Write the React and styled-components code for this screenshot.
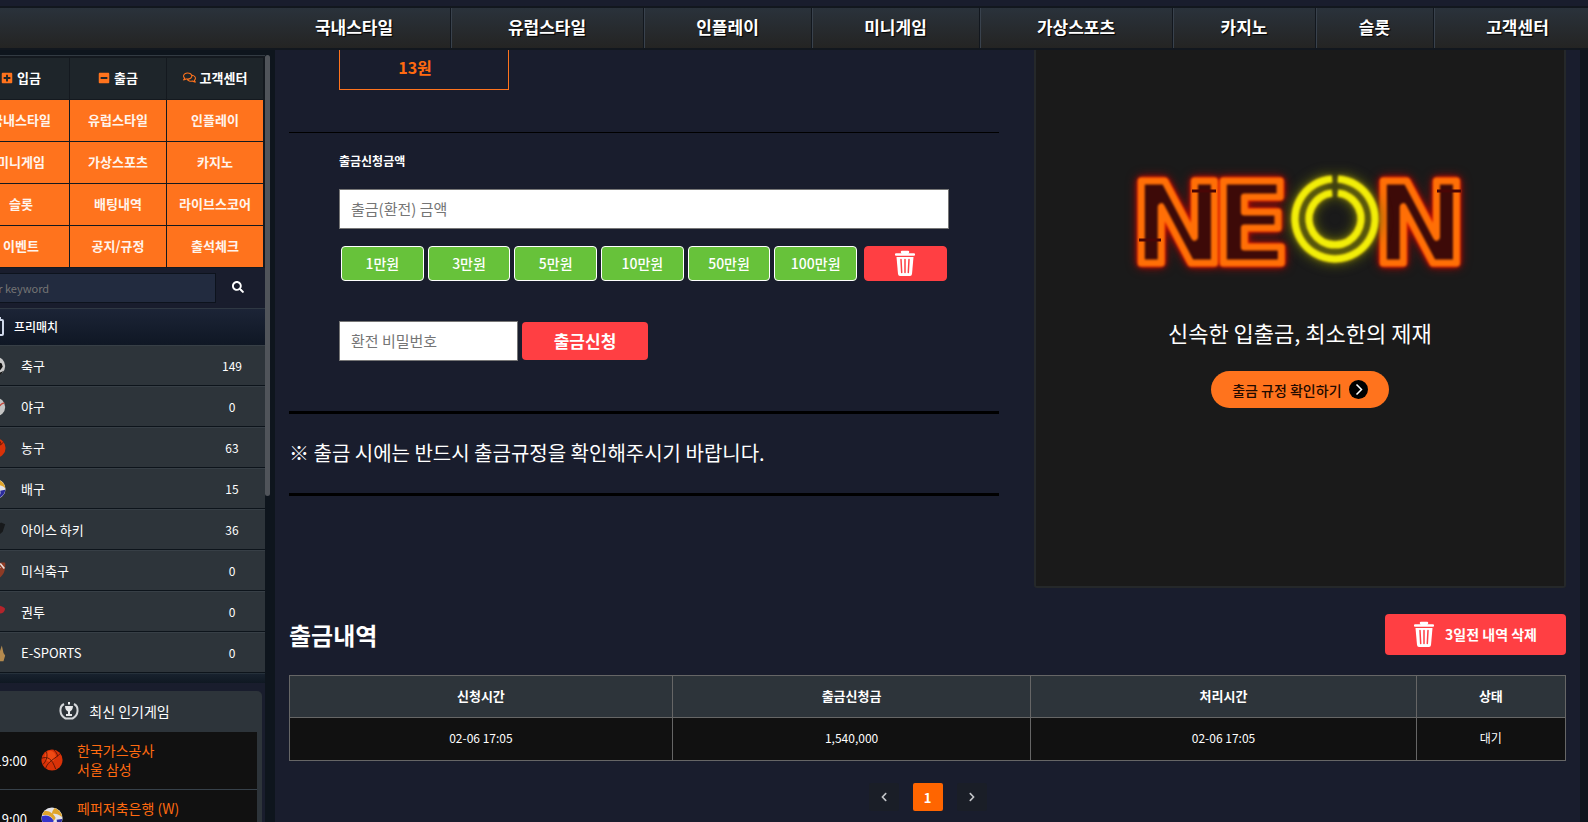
import React from 'react';
import styled, { createGlobalStyle } from 'styled-components';
import { FaPlusSquare, FaMinusSquare, FaRegComments, FaSearch, FaChevronLeft, FaChevronRight } from 'react-icons/fa';

const orange = '#ff731d';
const red = '#ff3f43';
const navy = '#191d2d';

const navItems = ['국내스타일', '유럽스타일', '인플레이', '미니게임', '가상스포츠', '카지노', '슬롯', '고객센터'];

const quickItems = [
    { label: '입금', icon: FaPlusSquare },
    { label: '출금', icon: FaMinusSquare },
    { label: '고객센터', icon: FaRegComments },
];

const menuItems = [
    '국내스타일',
    '유럽스타일',
    '인플레이',
    '미니게임',
    '가상스포츠',
    '카지노',
    '슬롯',
    '배팅내역',
    '라이브스코어',
    '이벤트',
    '공지/규정',
    '출석체크',
];

const sports = [
    { name: '축구', count: 149, icon: 'soccer' },
    { name: '야구', count: 0, icon: 'baseball' },
    { name: '농구', count: 63, icon: 'basketball' },
    { name: '배구', count: 15, icon: 'volleyball' },
    { name: '아이스 하키', count: 36, icon: 'hockey' },
    { name: '미식축구', count: 0, icon: 'football' },
    { name: '권투', count: 0, icon: 'boxing' },
    { name: 'E-SPORTS', count: 0, icon: 'esports' },
];

const games = [
    { time: '19:00', icon: 'basketball', teams: ['한국가스공사', '서울 삼성'] },
    { time: '19:00', icon: 'volleyball', teams: ['페퍼저축은행 (W)'] },
];

const amounts = ['1만원', '3만원', '5만원', '10만원', '50만원', '100만원'];

const history = [{ requested: '02-06 17:05', amount: '1,540,000', handled: '02-06 17:05', status: '대기' }];

const drawings = {
    soccer: (
        <>
            <circle cx="12" cy="12" r="11" fill="#c9c9c9" />
            <path d="M14 7l5 2 1 4-3 4-6-3-1-5z" fill="#111" />
            <path d="M5 4l-3 5 3 3 3-4zM16 20l5-2-3 4-5 1zM6 19l-3-2 4 5 4 1z" fill="#151515" />
        </>
    ),
    baseball: (
        <>
            <circle cx="12" cy="12" r="11" fill="#c4c4c4" />
            <path d="M22 7c-5 1-8 5-9 15M3 5c4 3 5 8 3 15" fill="none" stroke="#c4473c" strokeWidth="1.5" />
        </>
    ),
    basketball: (
        <>
            <circle cx="12" cy="12" r="11.5" fill="#d93208" />
            <circle cx="10" cy="8" r="6" fill="#ff5a1c" opacity="0.6" />
            <path
                d="M14 1c2 2 4 4 4 7M5 21C8 13 15 11 21 5M1 10c6-2 11 0 15 12M6 3c1 4 1 9-4 14"
                fill="none"
                stroke="#5a1404"
                strokeWidth="1"
            />
        </>
    ),
    volleyball: (
        <>
            <circle cx="12" cy="12" r="11.5" fill="#e4e4ea" />
            <path d="M1 10c5-2 10 0 13 5l-5 8C4 22 0 17 1 10z" fill="#3434c8" />
            <path d="M4 4c5 0 10 3 12 8l-2 3C11 9 7 8 1 9zM15 1c5 2 8 6 8 10-3-3-7-4-11-4 0-2 1-4 3-6z" fill="#e0a52a" />
            <path d="M23 13c0 5-4 9-9 10 3-3 4-6 3-9z" fill="#2a2a9c" />
        </>
    ),
    hockey: <path d="M2 20l4-9 12-8 5 2-3 9-9 8z" fill="#17191b" />,
    football: (
        <>
            <path d="M23 2c1 10-3 20-14 20-5 0-7-3-6-8C5 6 13 1 23 2z" fill="#8e3b25" />
            <path d="M17 3l5 6M11 14l6-7" stroke="#e8e0dc" strokeWidth="2" />
        </>
    ),
    boxing: <path d="M4 18l2-10c6-5 12-5 17 0-1 5-4 6-8 6l-3 6z" fill="#b3242b" />,
    esports: <path d="M3 22l3-8 5 2 1-9 4 5 3-9 2 9 2 3-2 7z" fill="#b48a4e" />,
};

const SportIcon = ({ name, size = 20 }) => (
    <svg width={size} height={size} viewBox="0 0 24 24" aria-hidden="true">
        {drawings[name]}
    </svg>
);

const TrashIcon = () => (
    <svg width="20" height="26" viewBox="0 0 20 26" fill="none" aria-hidden="true">
        <path d="M7 2h6M1 4.500h18" stroke="#fff" strokeWidth="2.500" strokeLinecap="round" />
        <path d="M1.500 7h17l-1.500 17q-.3 2-2 2H5q-1.700 0-2-2z" fill="#fff" />
        <path d="M6 9.500l.7 13M10 9.500v13M14 9.500l-.7 13" stroke={red} strokeWidth="1.500" strokeLinecap="round" />
    </svg>
);

const BoardIcon = () => (
    <svg width="18" height="20" viewBox="0 0 18 20" fill="none" stroke="#cfd8ea" strokeWidth="2" aria-hidden="true">
        <rect x="1" y="4" width="16" height="15" rx="1" />
        <path d="M4 1v6M14 1v4" />
    </svg>
);

const TrophyIcon = () => (
    <svg width="20" height="18" viewBox="0 0 20 18" fill="none" aria-hidden="true">
        <path d="M6 4h8c0 3-1.500 5-3 5.500V12h2v2H7v-2h2V9.500C7.500 9 6 7 6 4zM9 0h2v2.500H9z" fill="#e6e8ea" />
        <path d="M5 2C0 4.500 0 13 6.500 16.500h7C20 13 20 4.500 15 2" stroke="#d4d7da" strokeWidth="2" />
    </svg>
);

const CircleArrow = () => (
    <svg width="19" height="19" viewBox="0 0 19 19" fill="none" aria-hidden="true">
        <circle cx="9.500" cy="9.500" r="9.500" fill="#000" />
        <path d="M7.500 4.500l5 5-5 5" stroke="#fff" strokeWidth="1.500" />
    </svg>
);

const NeonLogo = () => (
    <NeonSvg viewBox="0 0 326 124" role="img" aria-label="NEON">
        <Tubes>
            <text x="-6 76" y="101">
                NE
            </text>
            <text x="236" y="101">
                N
            </text>
        </Tubes>
        <g stroke="#4a0606" strokeWidth="3">
            <path d="M55 29h24M2 78h22M300 29h24" />
        </g>
        <Ring>
            <path d="M201 17a40 40 0 1 1-6 0" />
            <path d="M201 31a26 26 0 1 1-6 0" />
        </Ring>
    </NeonSvg>
);

const App = () => (
    <Page>
        <GlobalStyle />
        <TopStrip />
        <Nav>
            {navItems.map((item) => (
                <NavLink key={item} href="#" $chars={item.length}>
                    {item}
                </NavLink>
            ))}
        </Nav>
        <Columns>
            <Sidebar>
                <SidebarContent>
                    <Menu>
                        {quickItems.map(({ label, icon: Icon }) => (
                            <QuickLink key={label} href="#">
                                <Icon size={label.length > 2 ? 13 : 12} color={orange} />
                                {label}
                            </QuickLink>
                        ))}
                        {menuItems.map((item) => (
                            <MenuLink key={item} href="#">
                                {item}
                            </MenuLink>
                        ))}
                    </Menu>
                    <Search onSubmit={(e) => e.preventDefault()}>
                        <SearchInput type="text" placeholder="Enter keyword" aria-label="Enter keyword" />
                        <SearchButton type="submit" aria-label="Search">
                            <FaSearch size={12} />
                        </SearchButton>
                    </Search>
                    <SportsHeader>
                        <BoardIcon />
                        프리매치
                    </SportsHeader>
                    {sports.map(({ name, count, icon }) => (
                        <SportRow key={name} href="#">
                            <SportIcon name={icon} />
                            <SportName>{name}</SportName>
                            <SportCount>{count}</SportCount>
                        </SportRow>
                    ))}
                    <SportsFooter />
                    <Popular>
                        <PopularTitle>
                            <TrophyIcon />
                            최신 인기게임
                        </PopularTitle>
                        {games.map(({ time, icon, teams }) => (
                            <Game key={teams[0]} href="#">
                                <GameTime>{time}</GameTime>
                                <SportIcon name={icon} size={22} />
                                <Teams>
                                    {teams.map((team) => (
                                        <span key={team}>{team}</span>
                                    ))}
                                </Teams>
                            </Game>
                        ))}
                    </Popular>
                </SidebarContent>
                <ScrollThumb />
            </Sidebar>
            <Main>
                <Top>
                    <Withdraw onSubmit={(e) => e.preventDefault()}>
                        <Inset>
                            <Balance>13원</Balance>
                        </Inset>
                        <Line />
                        <Inset>
                            <FieldLabel htmlFor="amount">출금신청금액</FieldLabel>
                            <TextInput id="amount" type="text" placeholder="출금(환전) 금액" />
                            <Amounts>
                                {amounts.map((amount) => (
                                    <AmountButton key={amount} type="button">
                                        {amount}
                                    </AmountButton>
                                ))}
                                <ClearButton type="button" aria-label="Clear">
                                    <TrashIcon />
                                </ClearButton>
                            </Amounts>
                            <SubmitRow>
                                <PasswordInput type="password" placeholder="환전 비밀번호" aria-label="환전 비밀번호" />
                                <SubmitButton type="submit">출금신청</SubmitButton>
                            </SubmitRow>
                        </Inset>
                        <Notice>※ 출금 시에는 반드시 출금규정을 확인해주시기 바랍니다.</Notice>
                    </Withdraw>
                    <Promo>
                        <NeonLogo />
                        <Slogan>신속한 입출금, 최소한의 제재</Slogan>
                        <RulesLink href="#">
                            출금 규정 확인하기
                            <CircleArrow />
                        </RulesLink>
                    </Promo>
                </Top>
                <HistoryHeader>
                    <HistoryTitle>출금내역</HistoryTitle>
                    <DeleteButton type="button">
                        <TrashIcon />
                        3일전 내역 삭제
                    </DeleteButton>
                </HistoryHeader>
                <HistoryTable>
                    <colgroup>
                        <Col $width="30%" />
                        <Col $width="28.1%" />
                        <Col $width="30.2%" />
                        <Col $width="11.7%" />
                    </colgroup>
                    <thead>
                        <tr>
                            <th>신청시간</th>
                            <th>출금신청금</th>
                            <th>처리시간</th>
                            <th>상태</th>
                        </tr>
                    </thead>
                    <tbody>
                        {history.map(({ requested, amount, handled, status }) => (
                            <tr key={requested}>
                                <td>{requested}</td>
                                <td>{amount}</td>
                                <td>{handled}</td>
                                <td>{status}</td>
                            </tr>
                        ))}
                    </tbody>
                </HistoryTable>
                <Pagination>
                    <PageButton type="button" aria-label="Previous">
                        <FaChevronLeft size={10} />
                    </PageButton>
                    <PageButton type="button" $active>
                        1
                    </PageButton>
                    <PageButton type="button" aria-label="Next">
                        <FaChevronRight size={10} />
                    </PageButton>
                </Pagination>
            </Main>
        </Columns>
    </Page>
);

const GlobalStyle = createGlobalStyle`
    * {
        box-sizing: border-box;
    }

    body {
        margin: 0;
        background: #0e151d;
        color: #fff;
        font-family: 'Noto Sans CJK KR', 'Noto Sans', sans-serif;
        font-size: 13px;
    }

    a {
        color: inherit;
        text-decoration: none;
    }

    button,
    input {
        font-family: inherit;
    }

    button {
        padding: 0 0 2px;
        border: 0;
        color: #fff;
        cursor: pointer;
    }
`;

const Page = styled.div`
    display: flex;
    flex-direction: column;
    height: 100vh;
    overflow: hidden;
`;

const TopStrip = styled.div`
    flex: none;
    height: 6px;
    background:
        radial-gradient(ellipse at 88px 0, #4a1228 0, transparent 18px),
        radial-gradient(ellipse at 58px 0, #3a2c2c 0, transparent 14px),
        ${navy};
`;

const Nav = styled.nav`
    display: flex;
    flex: none;
    height: 44px;
    padding-left: 258px;
    border: solid #12171e;
    border-width: 2px 0;
    background: linear-gradient(#2a323b, #242423);
`;

const NavLink = styled.a`
    display: flex;
    flex: none;
    justify-content: center;
    align-items: center;
    width: ${({ $chars }) => 68 + $chars * 25}px;
    padding-bottom: 3px;
    border-right: 1px solid #12171e;
    box-shadow: 1px 0 #39424d;
    font-size: 17px;
    font-weight: 700;
    text-shadow: 1px 1px 1px #000;
`;

const Columns = styled.div`
    display: flex;
    flex: 1;
    min-height: 0;
    padding-right: 8px;
`;

const Sidebar = styled.aside`
    display: flex;
    flex: none;
    align-items: flex-start;
    width: 303px;
    margin-left: -28px;
    padding-top: 5px;
`;

const SidebarContent = styled.div`
    width: 293px;
    background: ${navy};
`;

const ScrollThumb = styled.div`
    width: 5px;
    height: 441px;
    border-radius: 3px;
    background: #50545a;
`;

const Menu = styled.nav`
    display: grid;
    grid-template-columns: repeat(3, 1fr);
    gap: 1px;
    padding: 2px 2px 1px 1px;
    border-top: 1px solid #323a42;
    background: #14191f;
`;

const QuickLink = styled.a`
    display: flex;
    justify-content: center;
    align-items: center;
    gap: 4px;
    height: 41px;
    padding-bottom: 2px;
    background: #1e252a;
    font-weight: 700;
`;

const MenuLink = styled(QuickLink)`
    background: ${orange};
    color: #fff4ec;
`;

const Search = styled.form`
    display: flex;
    align-items: center;
    height: 40px;
    padding-right: 5px;
`;

const SearchInput = styled.input`
    width: 244px;
    height: 30px;
    padding: 0 0 0 2px;
    border: 1px solid #0d131d;
    background: #222b3f;
    color: #fff;
    font-size: 11px;

    &::placeholder {
        color: #757575;
    }
`;

const SearchButton = styled.button`
    flex: 1;
    height: 30px;
    background: none;
`;

const SportsHeader = styled.h2`
    display: flex;
    align-items: center;
    gap: 10px;
    height: 37px;
    margin: 0;
    padding: 0 0 2px 14px;
    border-top: 1px solid #2f3843;
    background: linear-gradient(#1c2436, #0f1724);
    font-size: 12px;
    font-weight: 500;
`;

const SportRow = styled.a`
    display: flex;
    align-items: center;
    gap: 15px;
    height: 41px;
    padding: 0 25px 0 14px;
    border-top: 1px solid #373f46;
    border-bottom: 1px solid #0d141b;
    background: #2d343a;
`;

const SportName = styled.span`
    flex: 1;
`;

const SportCount = styled.span`
    width: 16px;
    display: flex;
    justify-content: center;
    font-size: 12px;
`;

const SportsFooter = styled.div`
    height: 10px;
    border-top: 1px solid #26313b;
    background: linear-gradient(#18222e, #0f1822);
`;

const Popular = styled.section`
    margin: 8px 3px 0 0;
    padding-right: 5px;
    border-radius: 5px;
    background: #2d343a;
`;

const PopularTitle = styled.h2`
    display: flex;
    justify-content: center;
    align-items: center;
    gap: 10px;
    height: 41px;
    margin: 0;
    padding-bottom: 2px;
    font-size: 14px;
    font-weight: 400;
`;

const Game = styled.a`
    display: flex;
    align-items: flex-start;
    gap: 14px;
    height: 58px;
    padding: 9px 0 0 22px;
    border-bottom: 1px solid #37414a;
    background: #111;

    svg {
        margin-top: 8px;
    }
`;

const GameTime = styled.span`
    width: 33px;
    line-height: 40px;
    text-align: right;
`;

const Teams = styled.span`
    display: flex;
    flex-direction: column;
    color: #ff6a10;
    font-size: 14px;
    line-height: 19px;
`;

const Main = styled.main`
    flex: 1;
    padding: 0 14px;
    background: ${navy};
`;

const Top = styled.div`
    display: grid;
    grid-template-columns: 4fr 3fr;
    gap: 35px;
`;

const Withdraw = styled.form`
    min-width: 0;
`;

const Inset = styled.div`
    padding: 0 50px;
`;

const Balance = styled.div`
    width: 170px;
    height: 40px;
    padding-right: 18px;
    border: 1px solid ${orange};
    border-top: 0;
    color: #ff6a10;
    font-size: 16px;
    font-weight: 700;
    line-height: 34px;
    text-align: center;
`;

const Line = styled.hr`
    height: 1px;
    margin: 42px 0 20px;
    border: 0;
    background: #000;
`;

const FieldLabel = styled.label`
    display: block;
    margin-bottom: 20px;
    font-size: 12px;
    font-weight: 700;
    line-height: 16px;
`;

const TextInput = styled.input`
    display: block;
    width: 100%;
    height: 40px;
    padding: 0 11px 2px;
    border: 1px solid #767676;
    background: #fff;
    font-size: 15px;

    &::placeholder {
        color: #757575;
    }
`;

const PasswordInput = styled(TextInput)`
    width: 179px;
`;

const Amounts = styled.div`
    display: flex;
    gap: 4px;
    padding: 17px 2px 0;
`;

const AmountButton = styled.button`
    flex: 1;
    height: 35px;
    border: 1px solid #fff;
    border-radius: 4px;
    background: #67c23a;
    font-size: 14px;
    font-weight: 500;
`;

const ClearButton = styled(AmountButton)`
    display: flex;
    justify-content: center;
    align-items: center;
    margin-left: 3px;
    border-color: ${red};
    background: ${red};
`;

const SubmitRow = styled.div`
    display: flex;
    align-items: center;
    gap: 4px;
    margin: 40px 0 50px;
`;

const SubmitButton = styled.button`
    width: 126px;
    height: 38px;
    border-radius: 4px;
    background: ${red};
    font-size: 17px;
    font-weight: 700;
`;

const Notice = styled.p`
    margin: 0;
    padding-bottom: 2px;
    border: solid #000;
    border-width: 3px 0;
    font-size: 20px;
    line-height: 77px;
`;

const Promo = styled.section`
    display: flex;
    flex-direction: column;
    align-items: center;
    padding: 112px 20px 178px;
    border: 2px solid #25282a;
    border-top: 0;
    border-radius: 0 0 3px 3px;
    background: #1a1a1a;
`;

const NeonSvg = styled.svg`
    width: 326px;
    max-width: 100%;
    overflow: visible;
    font-family: 'DejaVu Sans', sans-serif;
    font-size: 112px;
    font-weight: 700;
    fill: none;
    stroke-linejoin: round;
`;

const Tubes = styled.g`
    fill: #3d0a08;
    stroke: #ff6f06;
    stroke-width: 7;
    filter: blur(1px) drop-shadow(0 0 2px #f01c00) drop-shadow(0 0 5px #8c0505);
`;

const Ring = styled.g`
    stroke: #f2ee08;
    stroke-width: 7;
    filter: blur(1px) drop-shadow(0 0 2px #a08a10) drop-shadow(0 0 6px #6a7004);
`;

const Slogan = styled.p`
    margin: 30px 0 23px;
    font-size: 22px;
    line-height: 32px;
`;

const RulesLink = styled.a`
    display: flex;
    align-items: center;
    gap: 7px;
    height: 37px;
    padding: 0 21px;
    border-radius: 19px;
    background: ${orange};
    color: #220a00;
    font-size: 14px;
    font-weight: 500;
`;

const HistoryHeader = styled.div`
    display: flex;
    justify-content: space-between;
    align-items: center;
    margin: 26px 0 20px;
`;

const HistoryTitle = styled.h1`
    margin: 0;
    font-size: 24px;
    line-height: 32px;
`;

const DeleteButton = styled.button`
    display: flex;
    align-items: center;
    gap: 11px;
    height: 41px;
    padding: 0 29px 2px;
    border-radius: 4px;
    background: ${red};
    font-size: 14px;
    font-weight: 700;
`;

const HistoryTable = styled.table`
    width: 100%;
    border-collapse: collapse;
    table-layout: fixed;
    text-align: center;

    th,
    td {
        height: 42px;
        padding: 0 0 3px;
        border: 1px solid #666;
    }

    th {
        background: #2d343a;
    }

    td {
        height: 43px;
        background: #111;
        font-size: 12px;
    }
`;

const Col = styled.col`
    width: ${({ $width }) => $width};
`;

const Pagination = styled.nav`
    display: flex;
    justify-content: center;
    gap: 14px;
    margin-top: 22px;
`;

const PageButton = styled.button`
    display: flex;
    justify-content: center;
    align-items: center;
    width: 30px;
    height: 28px;
    padding: 0;
    border-radius: 2px;
    background: ${({ $active }) => ($active ? '#ff6500' : '#1a1e27')};
    color: ${({ $active }) => ($active ? '#fff' : '#c4c6ca')};
    font-size: 13px;
    font-weight: 700;
`;

export default App;
